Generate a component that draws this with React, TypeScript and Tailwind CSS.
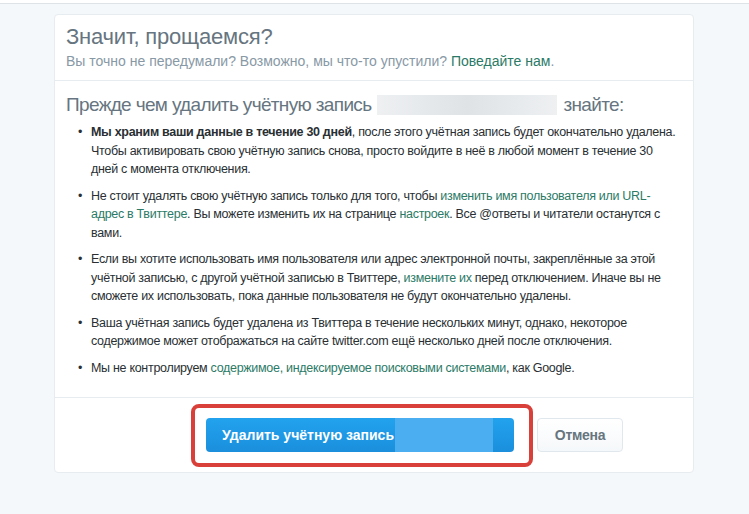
import React from "react";

const L = ({ children }: { children: React.ReactNode }) => (
  <span className="text-[#2b7a66]">{children}</span>
);

const Dot = () => <span className="absolute left-[-13px] top-[0px]">•</span>;

export default function App() {
  return (
    <div
      className="min-h-[514px] w-[749px] bg-[#f5f8fa] text-[#292f33]"
      style={{ fontFamily: '"Liberation Sans", Arial, sans-serif' }}
    >
      <div className="h-[4px] border-b border-[#dde3e7] bg-white" />
      <div className="pt-[10px]">
        <div className="ml-[54px] w-[640px] rounded-[4px] border border-[#e6ecf0] bg-white">
          <div className="border-b border-[#e6ecf0] px-[11px] pb-[10px] pt-[7px]">
            <h1 className="text-[22px] leading-[30px] tracking-[-0.2px] text-[#66757f]">
              Значит, прощаемся?
            </h1>
            <p className="text-[14px] leading-[18px] tracking-[0px] text-[#8899a6]">
              Вы точно не передумали? Возможно, мы что-то упустили?{" "}
              <L>Поведайте нам</L>.
            </p>
          </div>
          <div className="border-b border-[#e6ecf0] px-[11px] pb-[20px] pt-[10px]">
            <h2 className="flex items-center text-[19px] leading-[28px] tracking-[-0.65px] text-[#66757f]">
              <span>Прежде чем удалить учётную запись</span>
              <span className="ml-[6px] mr-[6px] inline-block h-[20px] w-[180px] bg-gradient-to-r from-[#eef0f2] via-[#dfe3e6] to-[#eef0f2]" />
              <span>знайте:</span>
            </h2>
            <ul className="mt-[4px] space-y-[8px] pl-[25px] pr-0 text-[12.5px] leading-[18.5px] tracking-[-0.3px] text-[#292f33]">
              <li className="relative">
                <Dot />
                <b>Мы храним ваши данные в течение 30 дней</b>, после этого
                учётная запись будет окончательно удалена. Чтобы активировать
                свою учётную запись снова, просто войдите в неё в любой момент в
                течение 30 дней с момента отключения.
              </li>
              <li className="relative">
                <Dot />
                Не стоит удалять свою учётную запись только для того, чтобы{" "}
                <L>изменить имя пользователя или URL-адрес в Твиттере</L>. Вы
                можете изменить их на странице <L>настроек</L>. Все @ответы и
                читатели останутся с вами.
              </li>
              <li className="relative">
                <Dot />
                Если вы хотите использовать имя пользователя или адрес
                электронной почты, закреплённые за этой учётной записью, с
                другой учётной записью в Твиттере, <L>измените их</L> перед
                отключением. Иначе вы не сможете их использовать, пока данные
                пользователя не будут окончательно удалены.
              </li>
              <li className="relative">
                <Dot />
                Ваша учётная запись будет удалена из Твиттера в течение
                нескольких минут, однако, некоторое содержимое может
                отображаться на сайте twitter.com ещё несколько дней после
                отключения.
              </li>
              <li className="relative">
                <Dot />
                Мы не контролируем{" "}
                <L>содержимое, индексируемое поисковыми системами</L>, как Google.
              </li>
            </ul>
          </div>
          <div className="flex justify-end pb-[5px] pr-[70px] pt-[6px]">
            <div className="rounded-[8px] border-[4px] border-[#d9403a] pb-[11px] pl-[11px] pr-[15px] pt-[10px]">
              <button className="flex h-[34px] w-[308px] items-center rounded-[4px] bg-gradient-to-b from-[#22a2ee] to-[#1b8fdc] pl-[16px] text-[14px] font-bold tracking-[0px] text-white">
                Удалить учётную запись
                <span className="ml-[1px] inline-block h-[34px] w-[98px] bg-[#4aaef0]" />
              </button>
            </div>
            <button className="ml-[4px] mt-[14px] h-[34px] w-[86px] rounded-[4px] border border-[#e1e8ed] bg-gradient-to-b from-white to-[#f5f8fa] text-[14px] font-bold tracking-[-0.3px] text-[#66757f]">
              Отмена
            </button>
          </div>
        </div>
      </div>
    </div>
  );
}
